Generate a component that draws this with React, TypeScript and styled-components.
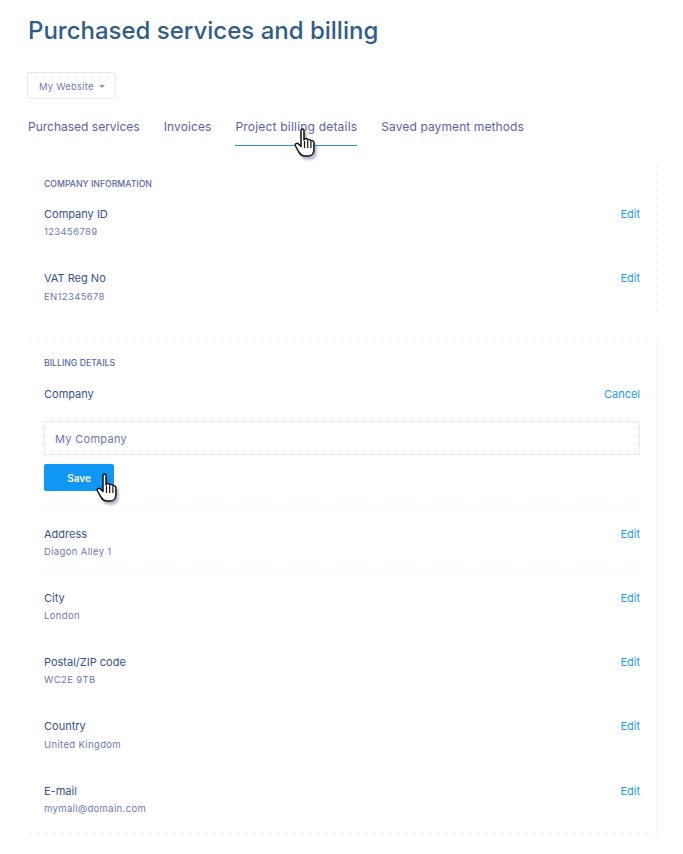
import React from 'react';
import styled, { createGlobalStyle, css } from 'styled-components';

const Global = createGlobalStyle`
  html, body { margin: 0; padding: 0; background: #fff; }
  body { font-family: Inter, "Noto Sans", sans-serif; }
`;

// the dotted frames alternate lavender and pale cyan dots, 4px apart
const dotsX = css`
  repeating-linear-gradient(to right, #d6d2ff 0 1px, transparent 1px 4px, #d2fbff 4px 5px, transparent 5px 8px)
`;
const dotsY = css`
  repeating-linear-gradient(to bottom, #d6d2ff 0 1px, transparent 1px 4px, #d2fbff 4px 5px, transparent 5px 8px)
`;
const faintDots = css`
  repeating-linear-gradient(to right, #dcfaff 0 1px, transparent 1px 3px)
`;

const Page = styled.div`
  position: relative;
  width: 683px;
  height: 854px;
  overflow: hidden;
  padding: 16px 26px 0 28px;
  box-sizing: border-box;
`;

const Title = styled.h1`
  margin: 0;
  font-size: 24px;
  line-height: 30px;
  font-weight: 500;
  color: #2f5d8a;
`;

const SiteButton = styled.button`
  display: flex;
  align-items: center;
  gap: 5px;
  margin: 26px 0 0 -1px;
  width: 89px;
  height: 27px;
  padding: 1px 0 0 11px;
  box-sizing: border-box;
  background: #fff;
  border: 1px dotted #cfd6fb;
  border-radius: 2px;
  font: 400 9.5px Inter, sans-serif;
  letter-spacing: 0.2px;
  color: #7479bd;
`;

const Caret = styled.span`
  width: 0;
  height: 0;
  border-left: 3px solid transparent;
  border-right: 3px solid transparent;
  border-top: 3px solid #8b8fc4;
`;

const Tabs = styled.nav`
  display: flex;
  gap: 24px;
  margin-top: 13px;
`;

const Tab = styled.a<{ $active?: boolean; $tracking?: number }>`
  display: block;
  height: 34px;
  padding-top: 7px;
  box-sizing: border-box;
  font-size: 12px;
  line-height: 15px;
  letter-spacing: ${(props) => props.$tracking ?? 0.1}px;
  color: #5a62a8;
  border-bottom: 1px solid ${(props) => (props.$active ? '#2a93d5' : 'transparent')};
`;

const InfoCard = styled.section`
  width: 626px;
  height: 149px;
  margin: 21px 0 0 3px;
  padding: 11px 17px 0 13px;
  box-sizing: border-box;
  background: ${dotsY} right top / 1px 100% no-repeat;
`;

const BillingCard = styled.section`
  width: 626px;
  height: 493px;
  margin: 24px 0 0 3px;
  padding: 17px 17px 0 13px;
  box-sizing: border-box;
  background:
    ${dotsX} left top / calc(100% - 4px) 1px no-repeat,
    ${dotsX} left bottom / calc(100% - 4px) 1px no-repeat,
    ${dotsY} right top / 1px 100% no-repeat;
`;

const SectionLabel = styled.h2`
  margin: 0;
  font-size: 8.7px;
  line-height: 12px;
  font-weight: 500;
  color: #5a68a8;
  text-transform: uppercase;
`;

const Row = styled.div<{ $height: number; $top?: number; $divided?: boolean }>`
  display: flex;
  justify-content: space-between;
  align-items: flex-start;
  height: ${(props) => props.$height}px;
  box-sizing: border-box;
  padding-top: ${(props) => props.$top ?? 16}px;
  ${(props) =>
    props.$divided &&
    css`
      background: ${faintDots} left bottom / 100% 1px no-repeat;
    `}
`;

const Name = styled.div`
  font-size: 11px;
  line-height: 14px;
  font-weight: 400;
  color: #34528e;
`;

const Value = styled.div<{ $gap?: number }>`
  margin-top: ${(props) => props.$gap ?? 4}px;
  font-size: 9.5px;
  line-height: 13px;
  color: #6a78b4;
  letter-spacing: 0.35px;
`;

const Action = styled.a`
  font-size: 11px;
  line-height: 14px;
  color: #1b9cf0;
`;

const CompanyInput = styled.div`
  height: 34px;
  box-sizing: border-box;
  padding-left: 10px;
  border: 1px dotted #dedbff;
  font-size: 11px;
  line-height: 34px;
  letter-spacing: 0.3px;
  color: #6a78b4;
`;

const SaveButton = styled.button`
  display: block;
  width: 70px;
  height: 27px;
  margin-top: 9px;
  padding: 0;
  background: #0f97f5;
  border: 0;
  border-radius: 2px;
  font: 600 10px Inter, sans-serif;
  color: #fff;
`;

const Divider = styled.div`
  height: 1px;
  margin-top: 19px;
  background: ${faintDots};
`;

const Cursor = styled.svg<{ $left: number; $top: number }>`
  position: absolute;
  left: ${(props) => props.$left}px;
  top: ${(props) => props.$top}px;
  width: 24px;
  height: 30px;
  filter: drop-shadow(2px 3px 1px rgba(90, 90, 130, 0.45));
`;

const Hand = ({ left, top }: { left: number; top: number }) => (
  <Cursor $left={left} $top={top} viewBox="0 0 24 30">
    <path
      d="M7 2.500c0-2 3-2 3 0V12l.5-1c1.500-.8 3-.3 3.200 1 1.200-.9 3-.4 3.200 1 1.300-.7 3-.1 3 1.500V22c0 3.500-2.500 6-6 6h-3c-3 0-4.500-1.500-6-4L1.500 18c-1-2 1.500-3.500 3-2L7 18.500z"
      fill="#fff"
      stroke="#111"
      strokeWidth="1.500"
      strokeLinejoin="round"
    />
    <path d="M10.500 13v7M13.700 13v7M16.900 14v6" stroke="#111" strokeWidth="1.200" />
  </Cursor>
);

const details = [
  { name: 'Address', value: 'Diagon Alley 1', height: 64, divided: true },
  { name: 'City', value: 'London', height: 64 },
  { name: 'Postal/ZIP code', value: 'WC2E 9TB', height: 64 },
  { name: 'Country', value: 'United Kingdom', height: 65, gap: 5 },
  { name: 'E-mail', value: 'mymail@domain.com', height: 50 },
];

export default function App() {
  return (
    <Page>
      <Global />
      <Title>Purchased services and billing</Title>
      <SiteButton>
        My Website <Caret />
      </SiteButton>
      <Tabs>
        <Tab $tracking={0}>Purchased services</Tab>
        <Tab>Invoices</Tab>
        <Tab $active $tracking={0.2}>Project billing details</Tab>
        <Tab>Saved payment methods</Tab>
      </Tabs>
      <InfoCard>
        <SectionLabel>Company information</SectionLabel>
        <Row $height={64} $top={17}>
          <div>
            <Name>Company ID</Name>
            <Value>123456789</Value>
          </div>
          <Action>Edit</Action>
        </Row>
        <Row $height={64} $top={17}>
          <div>
            <Name>VAT Reg No</Name>
            <Value $gap={5}>EN12345678</Value>
          </div>
          <Action>Edit</Action>
        </Row>
      </InfoCard>
      <BillingCard>
        <SectionLabel>Billing details</SectionLabel>
        <Row $height={52} $top={18}>
          <Name>Company</Name>
          <Action>Cancel</Action>
        </Row>
        <CompanyInput>My Company</CompanyInput>
        <SaveButton>Save</SaveButton>
        <Divider />
        {details.map((d) => (
          <Row key={d.name} $height={d.height} $divided={d.divided}>
            <div>
              <Name>{d.name}</Name>
              <Value $gap={d.gap}>{d.value}</Value>
            </div>
            <Action>Edit</Action>
          </Row>
        ))}
      </BillingCard>
      <Hand left={294} top={128} />
      <Hand left={96} top={473} />
    </Page>
  );
}
